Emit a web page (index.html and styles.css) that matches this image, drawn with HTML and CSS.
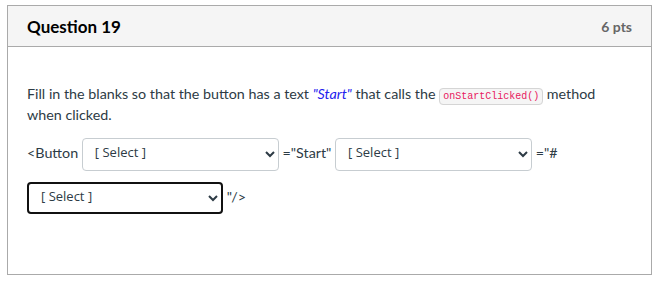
FILE: index.html
```html
<!DOCTYPE html>
<html lang="en">
<head>
  <meta charset="UTF-8" />
  <title>Question 19</title>
  <link rel="stylesheet" href="styles.css">
</head>
<body>
  <div class="question">
    <div class="header">
      <span class="title">Question 19</span>
      <span class="points">6 pts</span>
    </div>

    <div class="text">
      <p>Fill in the blanks so that the button has a text <em>"Start"</em> that calls the <code>onStartClicked()</code> method when clicked.</p>

      <p class="answer">
        &lt;Button
        <select class="blank"><option>[ Select ]</option></select>
        ="Start"
        <select class="blank"><option>[ Select ]</option></select>
        ="#
        <select class="blank focused"><option>[ Select ]</option></select>
        "/&gt;
      </p>
    </div>
  </div>
</body>
</html>
```

FILE: styles.css
```css
body {
  margin: 5px 10px 10px 7px;
  font-family: Lato, "Liberation Sans", sans-serif;
  color: #2d3b45;
  background: #fff;
}
.question {
  border: 1px solid #aaa;
  height: 268px;
}
.header {
  display: flex;
  justify-content: space-between;
  align-items: center;
  height: 40px;
  padding: 0 19px 0 19px;
  background: #f5f5f5;
  border-bottom: 1px solid #aaa;
}
.title {
  font-size: 17px;
  font-weight: bold;
  color: #000;
}
.points {
  font-size: 14px;
  font-weight: bold;
  color: #666;
}
.text {
  padding: 36px 19px 0 19px;
  font-size: 14.3px;
  line-height: 21px;
}
.text p {
  margin: 0;
}
em {
  color: #2222ee;
}
code {
  font-family: "Liberation Mono", monospace;
  font-size: 10px;
  line-height: 1;
  color: #e8175d;
  background: #f5f5f5;
  border: 1px solid #d5d5d5;
  border-radius: 4px;
  padding: 2px 3px;
}
.answer {
  margin-top: 6px !important;
  line-height: 44px;
}
.blank {
  width: 197px;
  height: 33px;
  vertical-align: middle;
  margin: 0;
  padding: 0 8px 5px 8px;
  font-family: "Open Sans", sans-serif;
  font-size: 13px;
  color: #2d3b45;
  background: #fff;
  border: 1px solid #c7cdd1;
  border-radius: 4px;
}
.focused {
  width: 196px;
  height: 32px;
  border: 2px solid #111;
}
```
